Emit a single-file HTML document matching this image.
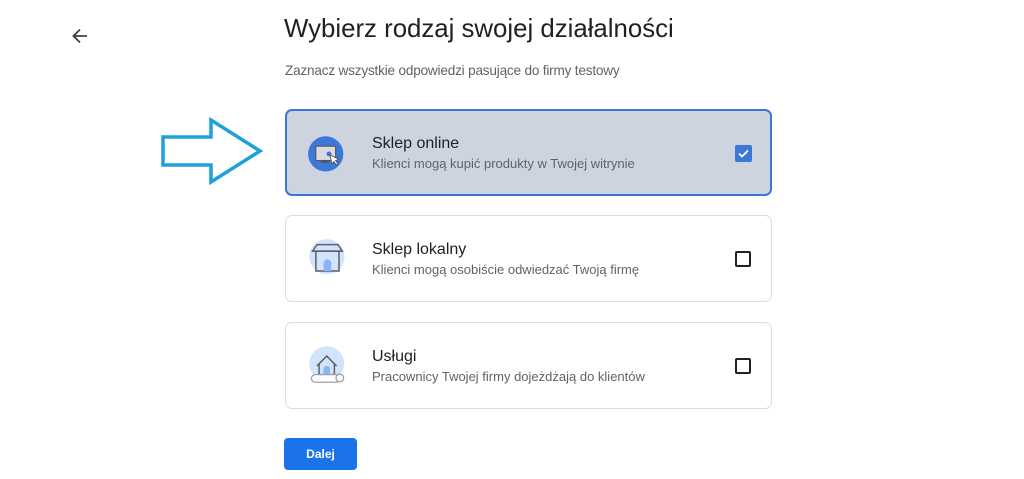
<!DOCTYPE html>
<html><head><meta charset="utf-8"><style>
*{margin:0;padding:0;box-sizing:border-box}
body{width:1024px;height:479px;background:#fff;font-family:"Liberation Sans",sans-serif;position:relative;overflow:hidden;color:#202124}
.abs{position:absolute}
h1{position:absolute;left:284px;top:15px;font-size:25.8px;font-weight:400;color:#202124}
.sub{left:285px;top:63px;font-size:13.6px;color:#5f6368;letter-spacing:-0.2px}
.card{position:absolute;left:285px;width:487px;height:87px;border:1px solid #dadce0;border-radius:7px;background:#fff}
.card.sel{background:#cdd3df;border:2px solid #3a76d3}
.t{position:absolute;left:86px;top:25px;font-size:16px;color:#202124}
.d{position:absolute;left:86px;top:46px;font-size:13px;color:#5f6368}
.sel .t{left:85px;top:24px}.sel .d{left:85px;top:45px}
.cb{position:absolute;left:449px;top:35px;width:16px;height:16px;border:2px solid #202124;border-radius:2px}
.ic{position:absolute;left:22px;top:22px}
.btn{left:284px;top:438px;width:73px;height:32px;background:#1a73e8;border-radius:4px;color:#fff;font-size:12px;font-weight:bold;text-align:center;line-height:32px}
</style></head><body>
<svg class="abs" style="left:70px;top:26px" width="20" height="20" viewBox="0 0 20 20"><path d="M17 10H4M10 3.5L3.5 10 10 16.5" stroke="#3c4043" stroke-width="1.8" fill="none"/></svg>
<h1>Wybierz rodzaj swojej działalności</h1>
<div class="abs sub">Zaznacz wszystkie odpowiedzi pasujące do firmy testowy</div>
<svg class="abs" style="left:158px;top:115px" width="110" height="72" viewBox="0 0 110 72"><path d="M5 22H53V5L102 36 53 67V50H5Z" fill="none" stroke="#1ba1dd" stroke-width="3.5" stroke-linejoin="miter"/></svg>

<div class="card sel" style="top:109px">
<svg class="ic" style="left:20px;top:24px" width="44" height="40" viewBox="0 0 40 36"><circle cx="17" cy="17" r="16" fill="#3b78d8"/><rect x="8" y="10" width="18" height="13" fill="#d9dbe0" stroke="#555" stroke-width="1"/><rect x="13" y="23" width="7" height="2" fill="#555"/><circle cx="20" cy="17" r="2.2" fill="#3b78d8"/><path d="M21 18l8 4-3 1 2 3-1.5 1-2-3-2 2z" fill="#fff" stroke="#555" stroke-width=".8"/></svg>
<div class="t">Sklep online</div><div class="d">Klienci mogą kupić produkty w Twojej witrynie</div>
<div class="abs" style="left:448px;top:34px;width:17px;height:17px;background:#3b78d8;border-radius:2px"><svg width="17" height="17" viewBox="0 0 17 17"><path d="M4 8.5l3 3 6-6" stroke="#fff" stroke-width="1.8" fill="none"/></svg></div>
</div>

<div class="card" style="top:215px">
<svg class="ic" style="left:20px;top:22px" width="44" height="44" viewBox="0 0 40 40"><circle cx="19" cy="17" r="16" fill="#d2e3fc"/><path d="M6 12l4-6h19l4 6z" fill="none" stroke="#5f6368" stroke-width="1.4"/><rect x="9" y="12" width="21" height="18" fill="none" stroke="#5f6368" stroke-width="1.4"/><path d="M16 30v-7a3.5 3.5 0 0 1 7 0v7z" fill="#8ab4f8"/></svg>
<div class="t">Sklep lokalny</div><div class="d">Klienci mogą osobiście odwiedzać Twoją firmę</div>
<div class="cb"></div></div>

<div class="card" style="top:322px">
<svg class="ic" style="left:20px;top:22px" width="48" height="44" viewBox="0 0 44 40"><circle cx="19" cy="17" r="16" fill="#d2e3fc"/><path d="M10 19l9-9 9 9M12 17v10h14V17" fill="none" stroke="#5f6368" stroke-width="1.4"/><path d="M16 27v-5a3 3 0 0 1 6 0v5z" fill="#8ab4f8"/><rect x="5" y="27" width="26" height="7" rx="3.5" fill="#fff" stroke="#9aa0a6" stroke-width="1.2"/><circle cx="31" cy="30" r="3.5" fill="#fff" stroke="#9aa0a6" stroke-width="1.2"/></svg>
<div class="t">Usługi</div><div class="d">Pracownicy Twojej firmy dojeżdżają do klientów</div>
<div class="cb"></div></div>

<div class="abs btn">Dalej</div>
</body></html>
